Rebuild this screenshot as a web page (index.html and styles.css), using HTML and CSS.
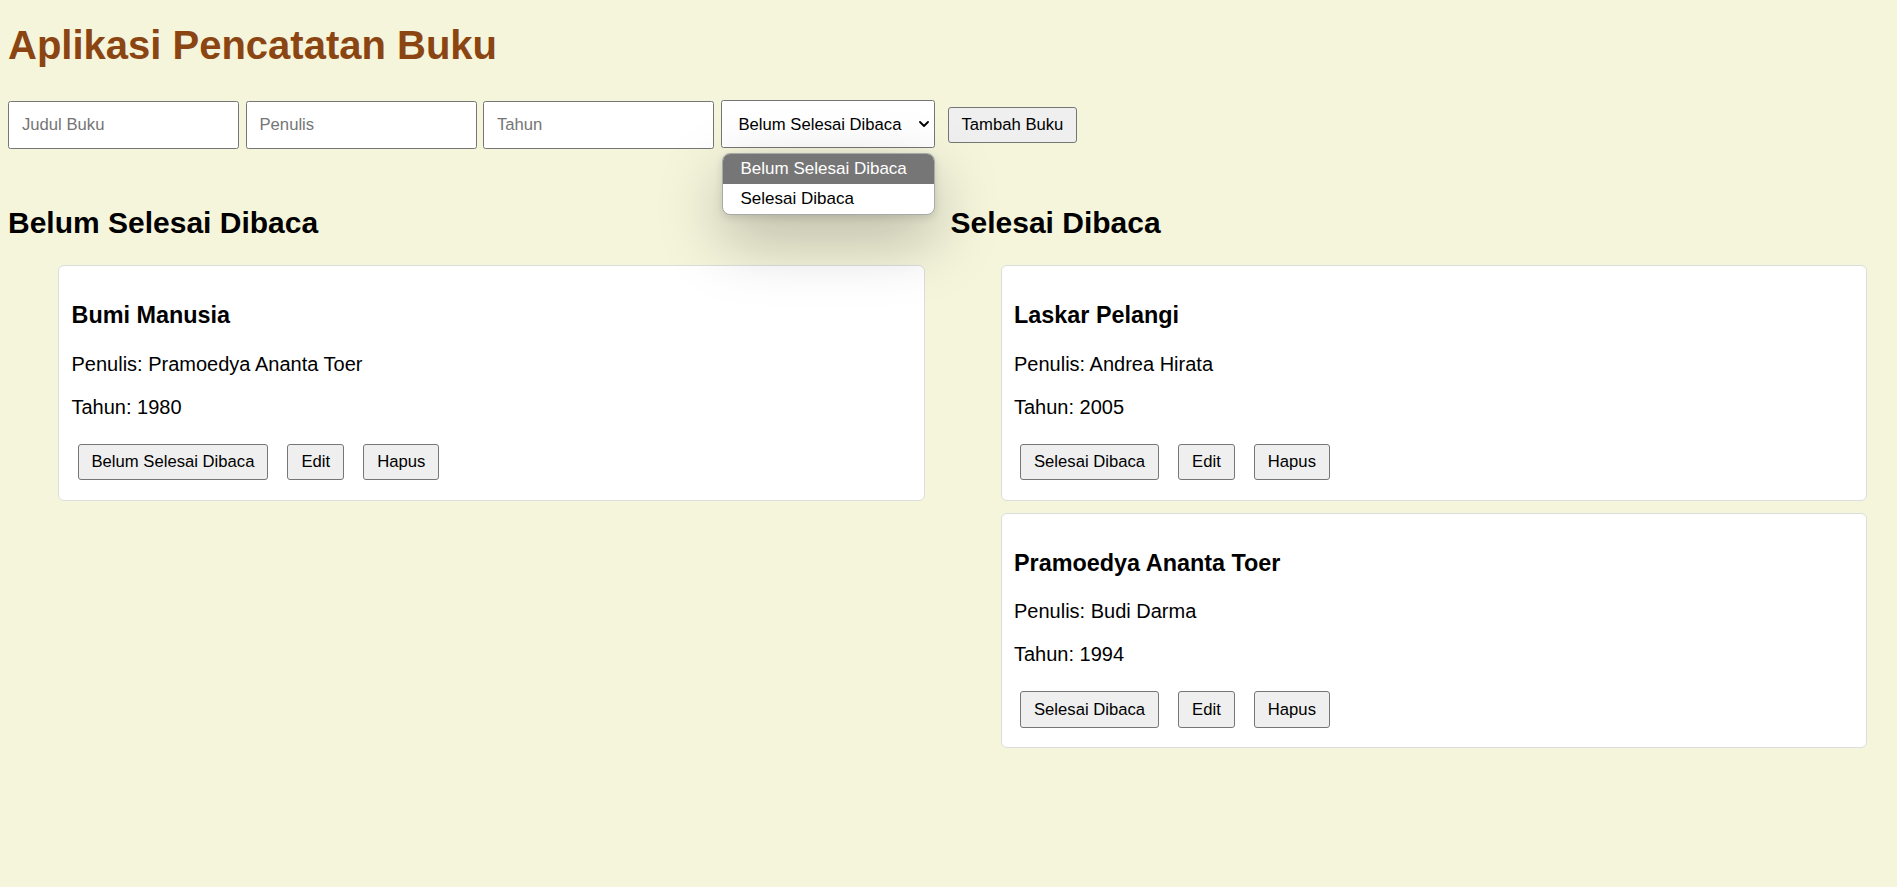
FILE: index.html
```html
<!DOCTYPE html>
<html lang="id">
<head>
<meta charset="utf-8">
<title>Aplikasi Pencatatan Buku</title>
<link rel="stylesheet" href="styles.css">
</head>
<body>
<h1 class="title">Aplikasi Pencatatan Buku</h1>
<form class="book-form">
  <input class="field" type="text" placeholder="Judul Buku">
  <input class="field" type="text" placeholder="Penulis">
  <input class="field" type="text" placeholder="Tahun">
  <div class="select-wrap">
    <select class="status-select">
      <option>Belum Selesai Dibaca</option>
      <option>Selesai Dibaca</option>
    </select>
    <svg class="select-chevron" width="10" height="6" viewBox="0 0 10 6" aria-hidden="true">
      <path d="M1 1 L5 5 L9 1" fill="none" stroke="#000" stroke-width="1.8" stroke-linecap="round" stroke-linejoin="round"/>
    </svg>
    <ul class="dropdown">
      <li class="dropdown-option is-active">Belum Selesai Dibaca</li>
      <li class="dropdown-option">Selesai Dibaca</li>
    </ul>
  </div>
  <button class="btn add-btn" type="button">Tambah Buku</button>
</form>
<main class="shelves">
  <section class="shelf">
    <h2 class="shelf-title">Belum Selesai Dibaca</h2>
    <ul class="book-list">
      <li class="book-card">
        <h3 class="book-title">Bumi Manusia</h3>
        <p class="book-meta">Penulis: Pramoedya Ananta Toer</p>
        <p class="book-meta">Tahun: 1980</p>
        <div class="actions">
          <button class="btn" type="button">Belum Selesai Dibaca</button>
          <button class="btn" type="button">Edit</button>
          <button class="btn" type="button">Hapus</button>
        </div>
      </li>
    </ul>
  </section>
  <section class="shelf">
    <h2 class="shelf-title">Selesai Dibaca</h2>
    <ul class="book-list">
      <li class="book-card">
        <h3 class="book-title">Laskar Pelangi</h3>
        <p class="book-meta">Penulis: Andrea Hirata</p>
        <p class="book-meta">Tahun: 2005</p>
        <div class="actions">
          <button class="btn" type="button">Selesai Dibaca</button>
          <button class="btn" type="button">Edit</button>
          <button class="btn" type="button">Hapus</button>
        </div>
      </li>
      <li class="book-card">
        <h3 class="book-title">Pramoedya Ananta Toer</h3>
        <p class="book-meta">Penulis: Budi Darma</p>
        <p class="book-meta">Tahun: 1994</p>
        <div class="actions">
          <button class="btn" type="button">Selesai Dibaca</button>
          <button class="btn" type="button">Edit</button>
          <button class="btn" type="button">Hapus</button>
        </div>
      </li>
    </ul>
  </section>
</main>
</body>
</html>
```
FILE: styles.css
```css
html, body {
  height: 100%;
}

body {
  margin: 0;
  padding: 0 30px 0 8px;
  background: #f5f5dc;
  color: #000;
  font-family: "Liberation Sans", Arial, sans-serif;
  font-size: 20px;
  box-sizing: border-box;
}

.title {
  margin: 23.3px 0 0;
  font-size: 40px;
  font-weight: bold;
  color: #8b4513;
}

.book-form {
  display: flex;
  align-items: baseline;
  gap: 6.5px;
  margin-top: 32px;
}

.field {
  box-sizing: border-box;
  width: 231px;
  height: 48px;
  padding: 0 13px;
  border: 1px solid #767676;
  border-radius: 2.5px;
  background: #fff;
  color: #000;
  font-family: "Liberation Sans", Arial, sans-serif;
  font-size: 16.67px;
}

.field::placeholder {
  color: #757575;
}

.select-wrap {
  position: relative;
}

.status-select {
  box-sizing: border-box;
  width: 214px;
  height: 48px;
  padding: 0 28px 0 17px;
  border: 1px solid #767676;
  border-radius: 2.5px;
  background: #fff;
  color: #000;
  font-family: "Liberation Sans", Arial, sans-serif;
  font-size: 16.67px;
  -webkit-appearance: none;
  appearance: none;
}

.select-chevron {
  position: absolute;
  top: 21px;
  right: 6px;
  pointer-events: none;
}

.dropdown {
  position: absolute;
  top: calc(100% + 4.5px);
  left: 1px;
  z-index: 10;
  box-sizing: border-box;
  width: 213px;
  margin: 0;
  padding: 0;
  list-style: none;
  background: #fff;
  border: 1px solid #a9a9a9;
  border-radius: 8px;
  overflow: hidden;
  box-shadow: 0 24px 64px rgba(0, 0, 0, 0.26), 0 3px 8px rgba(0, 0, 0, 0.12);
}

.dropdown-option {
  padding: 5.3px 18px;
  font-size: 17px;
  line-height: 19.6px;
  color: #000;
  white-space: nowrap;
}

.dropdown-option.is-active {
  background: #767676;
  color: #fff;
}

.btn {
  box-sizing: border-box;
  height: 36.4px;
  padding: 0 13px;
  border: 1px solid #767676;
  border-radius: 3px;
  background: #efefef;
  color: #000;
  font-family: "Liberation Sans", Arial, sans-serif;
  font-size: 16.67px;
  white-space: nowrap;
}

.add-btn {
  margin-left: 6.5px;
}

.shelves {
  display: flex;
  gap: 26px;
  margin-top: 32.7px;
}

.shelf {
  flex: 1;
  min-width: 0;
}

.shelf-title {
  margin: 25px 0;
  font-size: 30px;
  font-weight: bold;
}

.book-list {
  margin: 0;
  padding: 0 0 0 50px;
  list-style: none;
}

.book-card {
  margin-bottom: 12.5px;
  padding: 12.5px;
  background: #fff;
  border: 1px solid #ddd;
  border-radius: 6px;
}

.book-title {
  margin: 23.4px 0;
  font-size: 23.4px;
  font-weight: bold;
}

.book-meta {
  margin: 20px 0;
  font-size: 20px;
}

.actions {
  display: flex;
  gap: 19px;
  padding: 5px 0 7px 6px;
}
```
